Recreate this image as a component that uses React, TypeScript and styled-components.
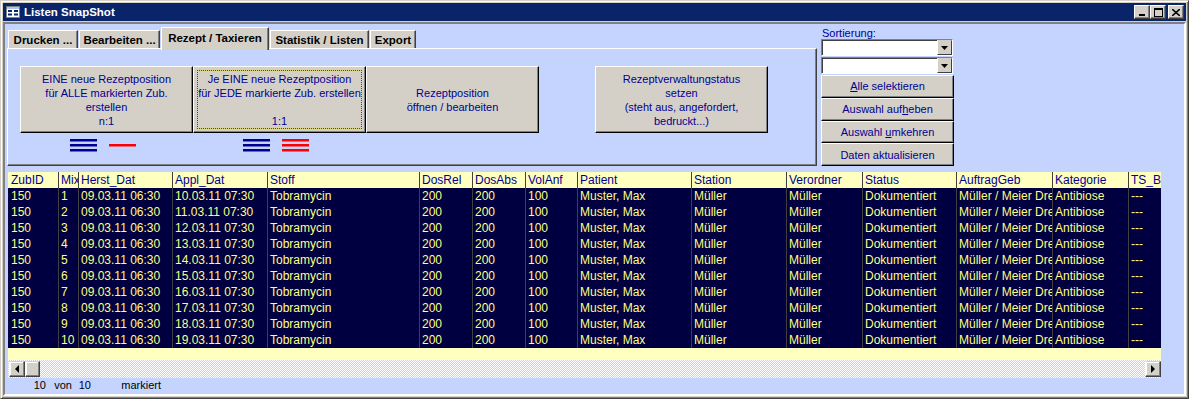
import styled, { createGlobalStyle } from "styled-components";

const GlobalStyle = createGlobalStyle`
  body {
    margin: 0;
    background: #d4d0c8;
    font-family: "Liberation Sans", Arial, sans-serif;
  }
`;

const NAVY_TEXT = "#000090";
const CLIENT_BG = "#c5d3ff";

const Window = styled.div`
  width: 1189px;
  height: 399px;
  box-sizing: border-box;
  background: #d4d0c8;
  border: 1px solid;
  border-color: #d4d0c8 #404040 #404040 #d4d0c8;
  box-shadow: inset 1px 1px #fff, inset -1px -1px #808080;
  padding: 2px;
  display: flex;
  flex-direction: column;
`;

const TitleBar = styled.div`
  height: 18px;
  background: #0a246a;
  display: flex;
  align-items: center;
  padding: 0 2px 0 3px;
`;

const TitleText = styled.div`
  color: #fff;
  font-weight: bold;
  font-size: 11.5px;
  margin-left: 4px;
  flex: 1;
`;

const CaptionButtons = styled.div`
  display: flex;
  align-items: center;
`;

const CaptionButton = styled.div<{ $gap?: number }>`
  width: 16px;
  height: 14px;
  box-sizing: border-box;
  margin-left: ${(p) => p.$gap ?? 0}px;
  background: #d4d0c8;
  border: 1px solid;
  border-color: #fff #404040 #404040 #fff;
  box-shadow: inset -1px -1px #808080;
  display: flex;
  align-items: center;
  justify-content: center;
`;

const Client = styled.div`
  margin-top: 1px;
  flex: 1;
  box-sizing: border-box;
  border: 2px solid;
  border-color: #808080 #fff #fff #808080;
  background: ${CLIENT_BG};
  display: flex;
  flex-direction: column;
`;

const TopSection = styled.div`
  display: flex;
  padding: 3px 0 0 2px;
  gap: 4px;
  height: 139px;
`;

const TabControl = styled.div`
  width: 810px;
  display: flex;
  flex-direction: column;
`;

const TabStrip = styled.div`
  height: 21px;
  display: flex;
  align-items: flex-end;
  gap: 1px;
  padding-left: 1px;
  position: relative;
  z-index: 1;
`;

const Tab = styled.div<{ $w: number; $active?: boolean }>`
  width: ${(p) => p.$w}px;
  height: ${(p) => (p.$active ? 23 : 18)}px;
  margin-bottom: ${(p) => (p.$active ? -2 : 0)}px;
  box-sizing: border-box;
  background: #d4d0c8;
  border-top: 1px solid #fff;
  border-left: 1px solid #fff;
  border-right: 1px solid #404040;
  box-shadow: inset -1px 0 #808080;
  font-size: 11.5px;
  font-weight: bold;
  color: #000;
  display: flex;
  align-items: ${(p) => (p.$active ? "flex-start" : "center")};
  padding-top: ${(p) => (p.$active ? 4 : 1)}px;
  justify-content: center;
  white-space: nowrap;
`;

const TabPanel = styled.div`
  flex: 1;
  box-sizing: border-box;
  border: 1px solid;
  border-color: #fff #404040 #404040 #fff;
  box-shadow: inset -1px -1px #808080;
  padding: 17px 0 0 12px;
`;

const CommandRow = styled.div`
  display: flex;
`;

const CommandButton = styled.div<{ $gap?: number; $focused?: boolean }>`
  position: relative;
  width: 173px;
  height: 67px;
  margin-left: ${(p) => p.$gap ?? 0}px;
  box-sizing: border-box;
  background: #d4d0c8;
  border: 1px solid;
  border-color: #fff #000 #000 #fff;
  box-shadow: inset -1px -1px #808080;
  color: ${NAVY_TEXT};
  font-size: 11px;
  line-height: 14px;
  white-space: pre-line;
  text-align: center;
  display: flex;
  align-items: center;
  justify-content: center;

  &::after {
    content: "";
    display: ${(p) => (p.$focused ? "block" : "none")};
    position: absolute;
    inset: 3px;
    border: 1px dotted #000;
    outline: 1px solid rgba(230, 230, 0, 0.35);
    outline-offset: -1px;
  }
`;

const IconRow = styled.div`
  display: flex;
  margin-top: 6px;
`;

const IconCell = styled.div`
  width: 173px;
  display: flex;
  justify-content: center;
  gap: 12px;
  padding-right: 8px;
  box-sizing: border-box;
`;

const SidePanel = styled.div`
  width: 133px;
  display: flex;
  flex-direction: column;
`;

const SortLabel = styled.div`
  height: 12px;
  font-size: 11px;
  line-height: 12px;
  color: ${NAVY_TEXT};
  padding-left: 1px;
`;

const Combo = styled.div`
  width: 132px;
  height: 17px;
  margin-bottom: 1px;
  box-sizing: border-box;
  background: #fff;
  border: 1px solid;
  border-color: #808080 #fff #fff #808080;
  box-shadow: inset 1px 1px #404040;
  display: flex;
  justify-content: flex-end;
`;

const ComboArrow = styled.div`
  width: 15px;
  height: 15px;
  box-sizing: border-box;
  background: #d4d0c8;
  border: 1px solid;
  border-color: #d4d0c8 #404040 #404040 #fff;
  display: flex;
  align-items: center;
  justify-content: center;
`;

const SideButton = styled.div`
  height: 23px;
  box-sizing: border-box;
  background: #d4d0c8;
  border: 1px solid;
  border-color: #fff #000 #000 #fff;
  box-shadow: inset -1px -1px #808080;
  color: ${NAVY_TEXT};
  font-size: 11px;
  display: flex;
  align-items: center;
  justify-content: center;

  u {
    text-decoration-thickness: 1px;
  }
`;

const Grid = styled.div`
  margin: 6px 0 0 3px;
  width: 1153px;
  background: #ffffc0;
  display: flex;
  flex-direction: column;
`;

const COLS = [50, 20, 94, 95, 152, 53, 53, 52, 114, 95, 76, 94, 96, 76, 33];

const Row = styled.div<{ $head?: boolean }>`
  display: grid;
  grid-template-columns: ${COLS.map((c) => c + "px").join(" ")};
  height: 16px;
  background: ${(p) => (p.$head ? "#ffffc0" : "#000040")};
  color: ${(p) => (p.$head ? NAVY_TEXT : "#ffff80")};
  font-size: 12px;
  line-height: 16px;
`;

const Cell = styled.div`
  overflow: hidden;
  white-space: nowrap;
  padding-left: 2px;
  border-left: 1px solid #404040;

  &:first-child {
    border-left: none;
    padding-left: 3px;
  }
`;

const EmptyArea = styled.div`
  height: 12px;
`;

const HScroll = styled.div`
  height: 18px;
  display: flex;
  align-items: center;
  padding: 0 0 0 1px;
  background: repeating-conic-gradient(#d4d0c8 0 25%, #fff 0 50%) 0 0 / 2px 2px;
`;

const ScrollButton = styled.div`
  width: 16px;
  height: 16px;
  box-sizing: border-box;
  background: #d4d0c8;
  border: 1px solid;
  border-color: #d4d0c8 #404040 #404040 #fff;
  box-shadow: inset -1px -1px #808080, inset 1px 1px #fff;
  display: flex;
  align-items: center;
  justify-content: center;
`;

const ScrollThumb = styled(ScrollButton)`
  width: 15px;
`;

const ScrollTrack = styled.div`
  flex: 1;
`;

const StatusBar = styled.div`
  height: 13px;
  display: flex;
  font-size: 11px;
  line-height: 13px;
  color: #000;
  margin-top: 1px;
`;

const StatusText = styled.span<{ $w: number }>`
  width: ${(p) => p.$w}px;
  text-align: right;
  flex: none;
`;

const Stripes = ({ color, count }: { color: string; count: number }) => (
  <svg width="27" height="13" viewBox="0 0 27 13">
    {count === 3 ? (
      <>
        <rect x="0" y="0" width="27" height="2.5" fill={color} />
        <rect x="0" y="5" width="27" height="2.5" fill={color} />
        <rect x="0" y="10" width="27" height="2.5" fill={color} />
      </>
    ) : (
      <rect x="0" y="5" width="27" height="2.5" fill={color} />
    )}
  </svg>
);

const Triangle = ({ dir }: { dir: "down" | "left" | "right" }) => {
  const pts =
    dir === "down" ? "0,0 7,0 3.5,4" : dir === "left" ? "4,0 4,8 0,4" : "0,0 0,8 4,4";
  const w = dir === "down" ? 7 : 4;
  const h = dir === "down" ? 4 : 8;
  return (
    <svg width={w} height={h} viewBox={`0 0 ${w} ${h}`}>
      <polygon points={pts} fill="#000" />
    </svg>
  );
};

const tabs = [
  { label: "Drucken ...", w: 70 },
  { label: "Bearbeiten ...", w: 81 },
  { label: "Rezept / Taxieren", w: 108, active: true },
  { label: "Statistik / Listen", w: 99 },
  { label: "Export", w: 46 },
];

const headers = [
  "ZubID",
  "MixNr",
  "Herst_Dat",
  "Appl_Dat",
  "Stoff",
  "DosRel",
  "DosAbs",
  "VolAnf",
  "Patient",
  "Station",
  "Verordner",
  "Status",
  "AuftragGeb",
  "Kategorie",
  "TS_Bearb",
];

const rows = Array.from({ length: 10 }, (_, i) => [
  "150",
  String(i + 1),
  "09.03.11 06:30",
  `${10 + i}.03.11 07:30`,
  "Tobramycin",
  "200",
  "200",
  "100",
  "Muster, Max",
  "Müller",
  "Müller",
  "Dokumentiert",
  "Müller / Meier Dres.",
  "Antibiose",
  "---",
]);

export default function App() {
  return (
    <>
      <GlobalStyle />
      <Window>
        <TitleBar>
          <svg width="14" height="12" viewBox="0 0 14 12">
            <rect x="0.5" y="0.5" width="13" height="11" fill="#fff" stroke="#808080" />
            <rect x="1" y="1" width="12" height="2" fill="#a6caf0" />
            <rect x="2" y="4" width="4" height="2" fill="#0a246a" />
            <rect x="8" y="4" width="4" height="2" fill="#0a246a" />
            <rect x="2" y="7.5" width="4" height="2" fill="#0a246a" />
            <rect x="8" y="7.5" width="4" height="2" fill="#0a246a" />
          </svg>
          <TitleText>Listen SnapShot</TitleText>
          <CaptionButtons>
            <CaptionButton>
              <svg width="8" height="8" viewBox="0 0 8 8">
                <rect x="1" y="6" width="6" height="2" fill="#000" />
              </svg>
            </CaptionButton>
            <CaptionButton>
              <svg width="9" height="9" viewBox="0 0 9 9">
                <rect x="0.5" y="0.5" width="8" height="8" fill="none" stroke="#000" />
                <rect x="0" y="0" width="9" height="2" fill="#000" />
              </svg>
            </CaptionButton>
            <CaptionButton $gap={2}>
              <svg width="8" height="7" viewBox="0 0 8 7">
                <path d="M0 0 L8 7 M8 0 L0 7" stroke="#000" strokeWidth="1.6" />
              </svg>
            </CaptionButton>
          </CaptionButtons>
        </TitleBar>
        <Client>
          <TopSection>
            <TabControl>
              <TabStrip>
                {tabs.map((t) => (
                  <Tab key={t.label} $w={t.w} $active={t.active}>
                    {t.label}
                  </Tab>
                ))}
              </TabStrip>
              <TabPanel>
                <CommandRow>
                  <CommandButton>
                    {"EINE neue Rezeptposition\nfür ALLE markierten Zub.\nerstellen\nn:1"}
                  </CommandButton>
                  <CommandButton $focused>
                    {"Je EINE neue Rezeptposition\nfür JEDE markierte Zub. erstellen\n\n1:1"}
                  </CommandButton>
                  <CommandButton>{"Rezeptposition\nöffnen / bearbeiten"}</CommandButton>
                  <CommandButton $gap={56}>
                    {"Rezeptverwaltungstatus\nsetzen\n(steht aus, angefordert,\nbedruckt...)"}
                  </CommandButton>
                </CommandRow>
                <IconRow>
                  <IconCell>
                    <Stripes color="#000090" count={3} />
                    <Stripes color="#ff0000" count={1} />
                  </IconCell>
                  <IconCell>
                    <Stripes color="#000090" count={3} />
                    <Stripes color="#ff0000" count={3} />
                  </IconCell>
                </IconRow>
              </TabPanel>
            </TabControl>
            <SidePanel>
              <SortLabel>Sortierung:</SortLabel>
              <Combo>
                <ComboArrow>
                  <Triangle dir="down" />
                </ComboArrow>
              </Combo>
              <Combo>
                <ComboArrow>
                  <Triangle dir="down" />
                </ComboArrow>
              </Combo>
              <SideButton>
                <span>
                  <u>A</u>lle selektieren
                </span>
              </SideButton>
              <SideButton>
                <span>
                  Auswahl auf<u>h</u>eben
                </span>
              </SideButton>
              <SideButton>
                <span>
                  Auswahl <u>u</u>mkehren
                </span>
              </SideButton>
              <SideButton>Daten aktualisieren</SideButton>
            </SidePanel>
          </TopSection>
          <Grid>
            <Row $head>
              {headers.map((h) => (
                <Cell key={h}>{h}</Cell>
              ))}
            </Row>
            {rows.map((r, i) => (
              <Row key={i}>
                {r.map((v, j) => (
                  <Cell key={j}>{v}</Cell>
                ))}
              </Row>
            ))}
            <EmptyArea />
            <HScroll>
              <ScrollButton>
                <Triangle dir="left" />
              </ScrollButton>
              <ScrollThumb />
              <ScrollTrack />
              <ScrollButton>
                <Triangle dir="right" />
              </ScrollButton>
            </HScroll>
          </Grid>
          <StatusBar>
            <StatusText $w={41}>10</StatusText>
            <StatusText $w={26}>von</StatusText>
            <StatusText $w={19}>10</StatusText>
            <StatusText $w={70}>markiert</StatusText>
          </StatusBar>
        </Client>
      </Window>
    </>
  );
}
